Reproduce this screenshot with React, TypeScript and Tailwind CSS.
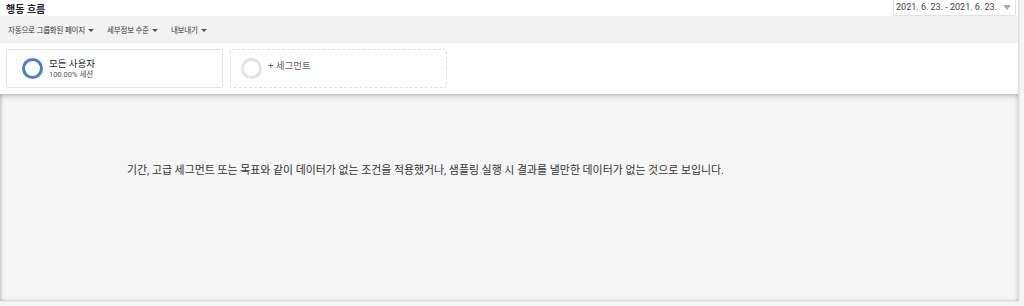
import React from 'react';

const font = { fontFamily: 'Roboto, "Noto Sans CJK KR", sans-serif' };

const MenuItem: React.FC<{ label: string }> = ({ label }) => (
    <button className="flex items-center gap-[3px] text-[7.5px] tracking-[-0.2px] text-[#333] leading-none">
        <span>{label}</span>
        <span className="w-0 h-0 border-l-[3px] border-r-[3px] border-t-[3px] border-l-transparent border-r-transparent border-t-[#555]" />
    </button>
);

const App: React.FC = () => {
    const menus = ['자동으로 그룹화된 페이지', '세부정보 수준', '내보내기'];

    return (
        <div className="w-[1024px] h-[306px] bg-[#f6f6f6] overflow-hidden" style={font}>
            <div className="w-[1018px] h-[301px] flex flex-col bg-white shadow-[1px_0_2px_rgba(0,0,0,0.15)]">
                {/* Title row */}
                <div className="h-[16px] flex items-start justify-between pl-[6px] pr-[2px]">
                    <h1 className="text-[10px] font-bold text-[#222] leading-none pt-[5px]">행동 흐름</h1>
                    <div className="h-[16px] flex items-center gap-[6px] pl-[2px] pr-[4px] border border-t-0 border-[#e2e2e2] rounded-b-[2px] text-[9px] text-[#444]">
                        <span>2021. 6. 23. - 2021. 6. 23.</span>
                        <span className="w-0 h-0 border-l-[4px] border-r-[4px] border-t-[5px] border-l-transparent border-r-transparent border-t-[#aaa]" />
                    </div>
                </div>

                {/* Toolbar */}
                <div className="h-[27px] bg-[#f2f2f2] flex items-center gap-[13px] pl-[8px] pt-[2px]">
                    {menus.map((m) => (
                        <MenuItem key={m} label={m} />
                    ))}
                </div>

                {/* Segments */}
                <div className="h-[51px] flex items-start gap-[7px] pl-[6px] pt-[6px]">
                    <div className="w-[217px] h-[39px] border border-[#e4e4e4] rounded-[2px] flex items-center pl-[15px] gap-[6px]">
                        <div className="w-[21px] h-[21px] rounded-full border-[3px] border-[#4a80c6]" />
                        <div className="flex flex-col">
                            <span className="text-[9.5px] text-[#222] leading-[12px]">모든 사용자</span>
                            <span className="text-[7.5px] text-[#555] leading-[9px]">100.00% 세션</span>
                        </div>
                    </div>
                    <div className="w-[217px] h-[39px] border border-dashed border-[#e0e0e0] rounded-[2px] flex items-center pl-[10px] gap-[6px]">
                        <div className="w-[21px] h-[21px] rounded-full border-[3px] border-[#e3e3e3]" />
                        <span className="text-[9.5px] text-[#666] pb-[5px]">+ 세그먼트</span>
                    </div>
                </div>

                {/* Empty state */}
                <div className="flex-1 bg-[#f6f6f6] shadow-[inset_0_4px_5px_-2px_rgba(0,0,0,0.22),inset_3px_0_4px_-2px_rgba(0,0,0,0.18),inset_-3px_0_4px_-2px_rgba(0,0,0,0.1),inset_0_-2px_3px_-1px_rgba(0,0,0,0.1)] pl-[127px] pt-[72px]">
                    <p className="text-[10.9px] text-[#333] leading-none">
                        기간, 고급 세그먼트 또는 목표와 같이 데이터가 없는 조건을 적용했거나, 샘플링 실행 시 결과를 낼만한 데이터가 없는 것으로 보입니다.
                    </p>
                </div>
            </div>
        </div>
    );
};

export default App;
